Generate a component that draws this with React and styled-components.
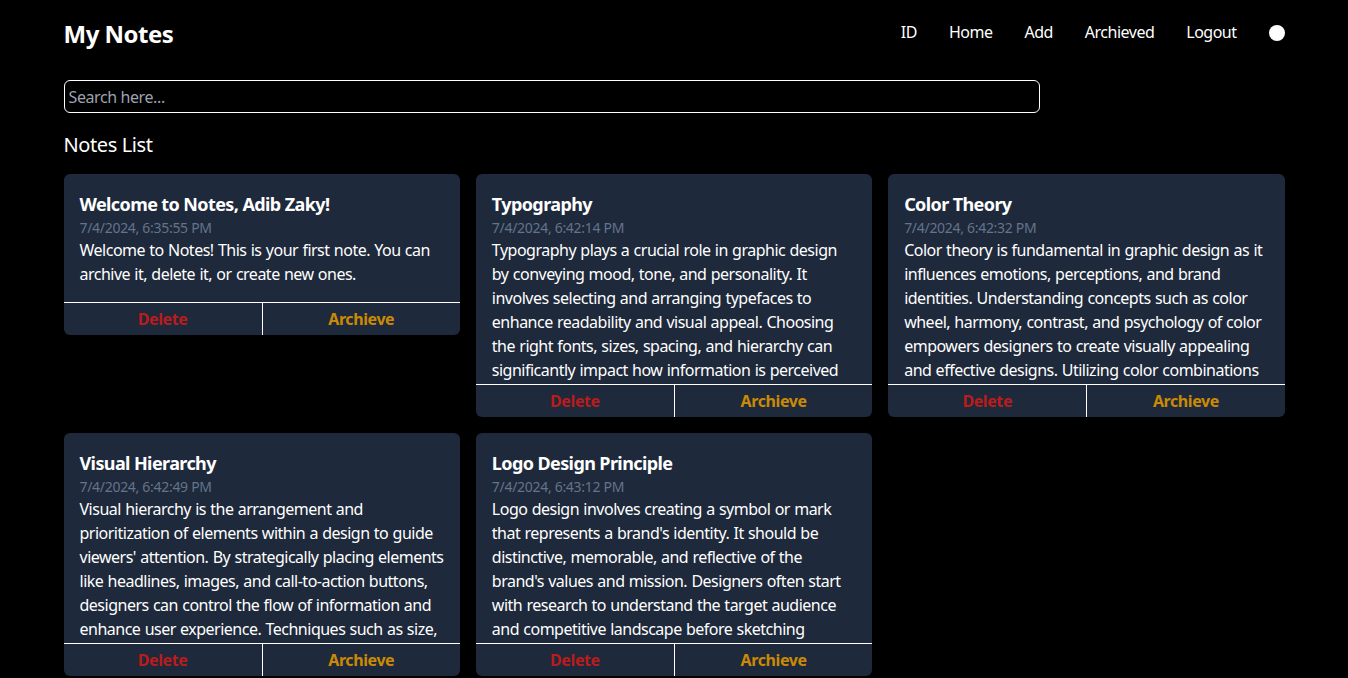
import React from 'react';
import styled, { createGlobalStyle } from 'styled-components';

const GlobalStyle = createGlobalStyle`
  * { box-sizing: border-box; }
  body {
    margin: 0;
    background: #000;
    color: #fff;
    font-family: "Segoe UI", "Noto Sans", sans-serif;
  }
`;

const notes = [
  {
    id: 1,
    title: 'Welcome to Notes, Adib Zaky!',
    date: '7/4/2024, 6:35:55 PM',
    body: 'Welcome to Notes! This is your first note. You can archive it, delete it, or create new ones.',
  },
  {
    id: 2,
    title: 'Typography',
    date: '7/4/2024, 6:42:14 PM',
    body: 'Typography plays a crucial role in graphic design by conveying mood, tone, and personality. It involves selecting and arranging typefaces to enhance readability and visual appeal. Choosing the right fonts, sizes, spacing, and hierarchy can significantly impact how information is perceived and understood by the audience.',
  },
  {
    id: 3,
    title: 'Color Theory',
    date: '7/4/2024, 6:42:32 PM',
    body: 'Color theory is fundamental in graphic design as it influences emotions, perceptions, and brand identities. Understanding concepts such as color wheel, harmony, contrast, and psychology of color empowers designers to create visually appealing and effective designs. Utilizing color combinations thoughtfully can evoke specific feelings.',
  },
  {
    id: 4,
    title: 'Visual Hierarchy',
    date: '7/4/2024, 6:42:49 PM',
    body: "Visual hierarchy is the arrangement and prioritization of elements within a design to guide viewers' attention. By strategically placing elements like headlines, images, and call-to-action buttons, designers can control the flow of information and enhance user experience. Techniques such as size, color, contrast, and spacing help establish hierarchy.",
  },
  {
    id: 5,
    title: 'Logo Design Principle',
    date: '7/4/2024, 6:43:12 PM',
    body: "Logo design involves creating a symbol or mark that represents a brand's identity. It should be distinctive, memorable, and reflective of the brand's values and mission. Designers often start with research to understand the target audience and competitive landscape before sketching potential concepts.",
  },
];

const Page = styled.div`
  width: 1221px;
  margin: 0 auto;
`;

const Header = styled.header`
  display: flex;
  align-items: center;
  justify-content: space-between;
  height: 66px;
`;

const Brand = styled.h1`
  margin: 0;
  font-size: 24px;
  font-weight: 700;
  letter-spacing: -0.5px;
`;

const Nav = styled.nav`
  display: flex;
  align-items: center;
  gap: 32px;
  margin-top: -2px;
`;

const NavLink = styled.a`
  color: #fff;
  font-size: 16px;
  letter-spacing: -0.5px;
  text-decoration: none;
`;

const ThemeDot = styled.span`
  width: 16px;
  height: 16px;
  margin-top: 1px;
  border-radius: 50%;
  background: #fff;
`;

const Search = styled.input`
  display: block;
  width: 80%;
  height: 33px;
  margin-top: 14px;
  padding: 0 4px;
  background: #000;
  color: #fff;
  border: 1px solid #fff;
  border-radius: 6px;
  font: inherit;
  font-size: 16px;
  letter-spacing: -0.4px;
  &::placeholder { color: #9ca3af; }
`;

const SectionTitle = styled.h2`
  margin: 18px 0 15px;
  font-size: 20px;
  font-weight: 400;
  line-height: 28px;
  letter-spacing: -0.4px;
`;

const Grid = styled.div`
  display: grid;
  grid-template-columns: repeat(3, 1fr);
  gap: 16px;
  align-items: start;
`;

const Card = styled.article`
  background: #1e293b;
  border-radius: 6px;
  overflow: hidden;
`;

const Content = styled.div`
  padding: 16px;
  max-height: 210px;
  overflow: hidden;
`;

const Title = styled.h3`
  margin: 0;
  padding-top: 1px;
  font-size: 18px;
  font-weight: 700;
  line-height: 26px;
  letter-spacing: -0.6px;
`;

const Date = styled.p`
  margin: 0;
  font-size: 14px;
  line-height: 21px;
  letter-spacing: -0.3px;
  color: #64748b;
`;

const Body = styled.p`
  margin: 0;
  font-size: 16px;
  line-height: 24px;
  letter-spacing: -0.5px;
  word-spacing: 0.6px;
`;

const Actions = styled.div`
  display: grid;
  grid-template-columns: 1fr 1fr;
  border-top: 1px solid #fff;
`;

const ActionButton = styled.button`
  height: 32px;
  background: transparent;
  border: 0;
  border-left: ${(p) => (p.$divider ? '1px solid #fff' : '0')};
  color: ${(p) => p.$color};
  font: inherit;
  font-size: 16px;
  font-weight: 700;
  letter-spacing: -0.4px;
  cursor: pointer;
`;

export default function App() {
  return (
    <>
      <GlobalStyle />
      <Page>
        <Header>
          <Brand>My Notes</Brand>
          <Nav>
            <NavLink href="#">ID</NavLink>
            <NavLink href="#">Home</NavLink>
            <NavLink href="#">Add</NavLink>
            <NavLink href="#">Archieved</NavLink>
            <NavLink href="#">Logout</NavLink>
            <ThemeDot />
          </Nav>
        </Header>
        <Search placeholder="Search here..." />
        <SectionTitle>Notes List</SectionTitle>
        <Grid>
          {notes.map((n) => (
            <Card key={n.id}>
              <Content>
                <Title>{n.title}</Title>
                <Date>{n.date}</Date>
                <Body>{n.body}</Body>
              </Content>
              <Actions>
                <ActionButton $color="#b91c1c">Delete</ActionButton>
                <ActionButton $color="#ca8a04" $divider>Archieve</ActionButton>
              </Actions>
            </Card>
          ))}
        </Grid>
      </Page>
    </>
  );
}
